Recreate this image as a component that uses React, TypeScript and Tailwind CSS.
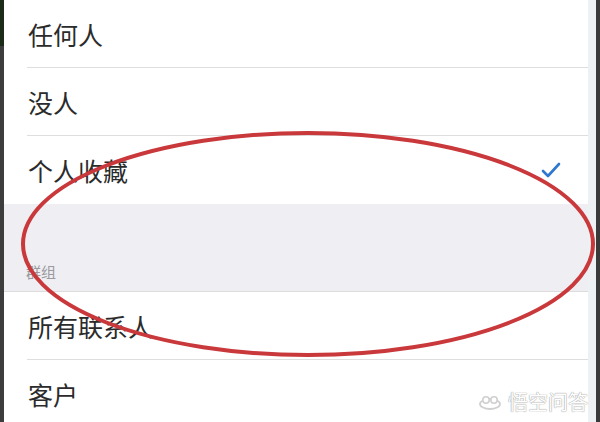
const font = "font-['Noto_Sans_CJK_SC','Noto_Sans',sans-serif]";

function Row({ label, checked, last }: { label: string; checked?: boolean; last?: boolean }) {
  return (
    <div className="relative h-[68px] shrink-0 bg-white pl-[24px] pr-[27px] flex items-center">
      <span className="text-[25px] text-[#2b2b2b] leading-none">{label}</span>
      {checked && (
        <svg className="ml-auto" width="20" height="16" viewBox="0 0 20 16">
          <path d="M2 9 L7 14 L18 2" fill="none" stroke="#2f78cf" strokeWidth="2.6" strokeLinecap="round" strokeLinejoin="round" />
        </svg>
      )}
      {!last && <div className="absolute bottom-0 left-[23px] right-0 h-px bg-[#dedede]" />}
    </div>
  );
}

export default function App() {
  return (
    <div className={`relative flex w-[600px] h-[422px] overflow-hidden bg-white ${font}`}>
      {/* left edge of the phone frame */}
      <div className="w-[4px] flex flex-col">
        <div className="h-[46px] bg-[#1c2a18]" />
        <div className="flex-1 bg-[#3d3d3d]" />
      </div>

      <div className="flex-1 flex flex-col">
        <Row label="任何人" />
        <Row label="没人" />
        <Row label="个人收藏" checked last />
        <div className="h-[88px] shrink-0 bg-[#efeff3] flex items-end pl-[22px] pb-[12px] border-b border-[#dcdcdc]">
          <span className="text-[15px] text-[#9a9a9e] leading-none">群组</span>
        </div>
        <Row label="所有联系人" />
        <Row label="客户" last />
      </div>

      {/* right edge */}
      <div className="w-[8px] bg-[#eef1f3]" />
      <div className="w-[4px] bg-[#3a3a3a]" />

      {/* hand-drawn marker around the middle rows */}
      <svg className="absolute inset-0 pointer-events-none" width="600" height="422" viewBox="0 0 600 422">
        <ellipse cx="308" cy="244" rx="285" ry="111" fill="none" stroke="#c9383b" strokeWidth="4" />
      </svg>

      {/* watermark */}
      <div className="absolute right-[12px] bottom-[10px] flex items-center gap-[6px]">
        <svg width="24" height="18" viewBox="0 0 24 18">
          <ellipse cx="12" cy="11" rx="10" ry="5" fill="none" stroke="#d0d0d0" strokeWidth="1.8" />
          <circle cx="8" cy="7" r="3.2" fill="#fff" stroke="#d0d0d0" strokeWidth="1.6" />
          <circle cx="16" cy="7" r="3.2" fill="#fff" stroke="#d0d0d0" strokeWidth="1.6" />
        </svg>
        <span className="text-[20px] leading-none text-white [text-shadow:0_0_1px_#999,0_0_1px_#999]">悟空问答</span>
      </div>
    </div>
  );
}
